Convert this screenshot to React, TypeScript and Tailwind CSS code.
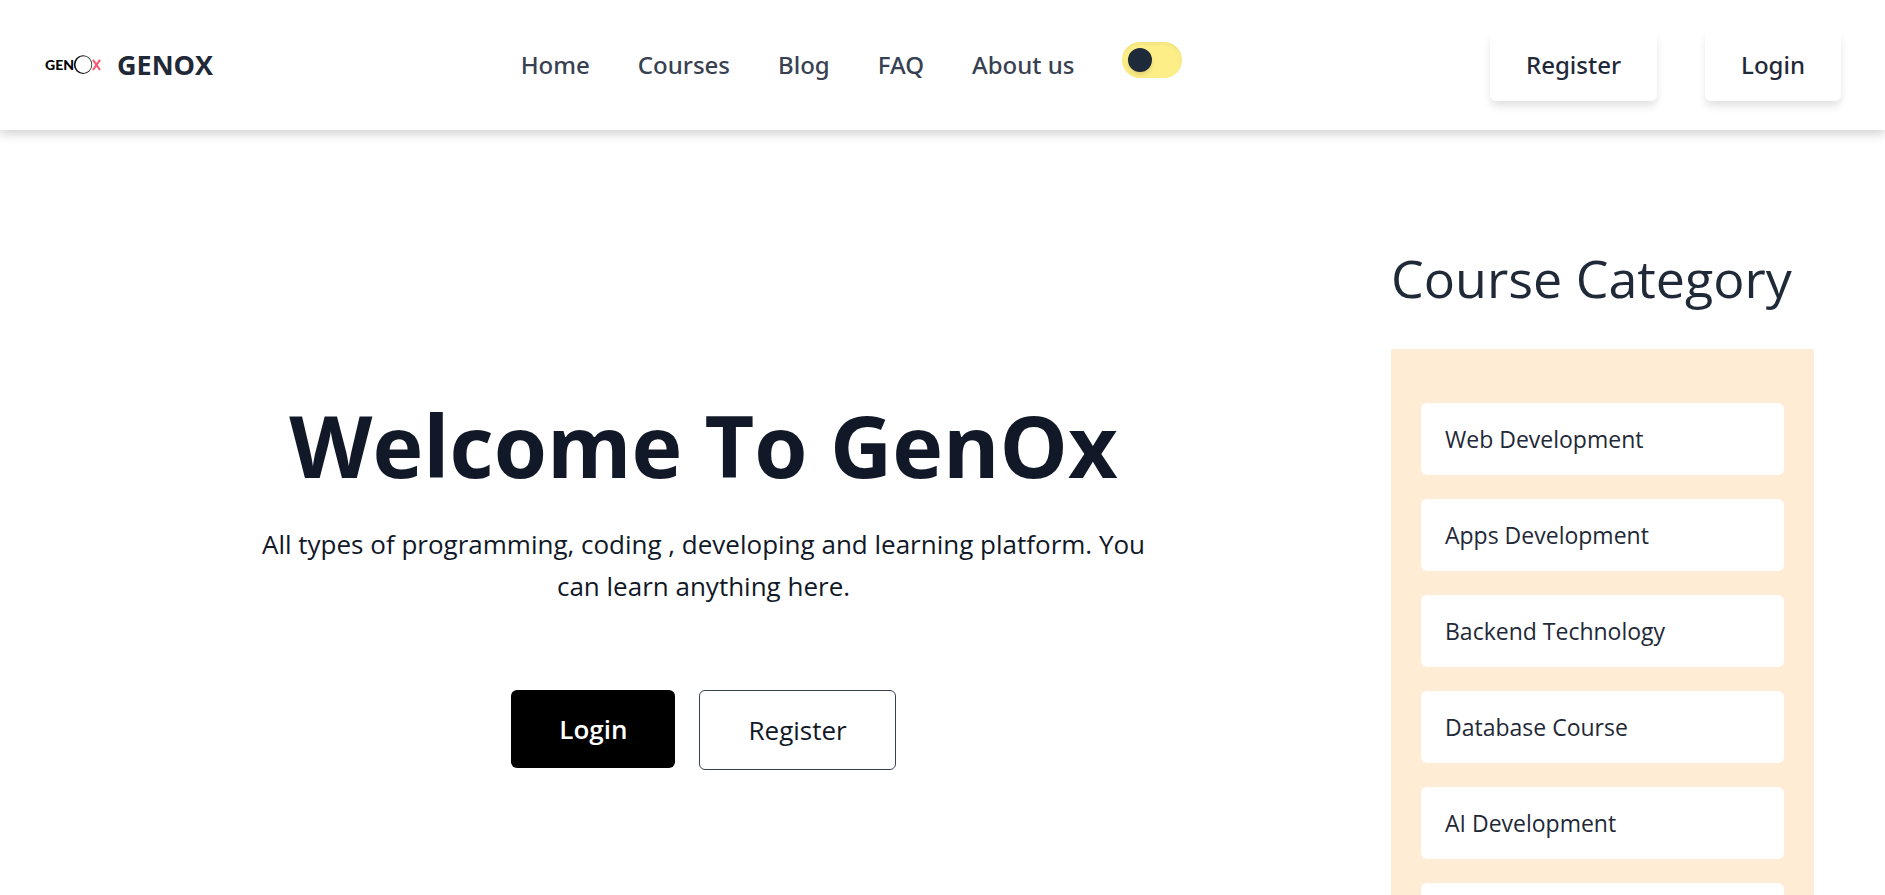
import { useState } from "react";

const navLinks = ["Home", "Courses", "Blog", "FAQ", "About us"];

const categories = [
  "Web Development",
  "Apps Development",
  "Backend Technology",
  "Database Course",
  "AI Development",
  "Data Science",
];

function LogoMark() {
  return (
    <svg width="58" height="24" viewBox="0 0 58 24" aria-hidden="true">
      <text x="1" y="17" fontFamily="Lato, sans-serif" fontWeight="900" fontSize="14" fill="#000000">
        GEN
      </text>
      <path
        fillRule="evenodd"
        fill="#111111"
        d="M39 2.2a9.2 9.4 0 1 0 0 18.8a9.2 9.4 0 1 0 0-18.8ZM39.5 3.3a8 8.3 0 1 1 0 16.6a8 8.3 0 1 1 0-16.6Z"
      />
      <path d="M49 6.8L56 17M56 6.8L49 17" stroke="#f65d73" strokeWidth="2.2" fill="none" />
    </svg>
  );
}

function ThemeSwitch() {
  const [dark, setDark] = useState(false);
  return (
    <button
      type="button"
      role="switch"
      aria-checked={dark}
      aria-label="Dark mode"
      onClick={() => setDark(!dark)}
      className={`mb-2.5 flex h-9 w-15 items-center rounded-full bg-[#fdee87] px-1.5 inset-shadow-sm ${dark ? "justify-end" : "justify-start"}`}
    >
      <span className="size-6 rounded-full bg-gray-800 shadow-md" />
    </button>
  );
}

export default function App() {
  return (
    <div className="min-h-screen bg-white font-['Open_Sans','Noto_Sans',sans-serif] text-[#1f2937]">
      <header className="flex h-[130px] items-center justify-between px-11 shadow-[0_4px_10px_rgba(0,0,0,0.18)]">
        <a href="#home" className="flex items-center gap-[15px]">
          <LogoMark />
          <span className="text-[27px] font-bold">GENOX</span>
        </a>
        <nav className="flex items-center gap-12 font-['Noto_Sans',sans-serif] text-[24px] font-medium text-[#374151]">
          {navLinks.map((label) => (
            <a key={label} href="#">
              {label}
            </a>
          ))}
          <ThemeSwitch />
        </nav>
        <div className="flex gap-12 font-['Noto_Sans',sans-serif] text-[24px] font-medium">
          <button type="button" className="h-[71px] rounded-md bg-white px-9 shadow-[0_6px_9px_-1px_rgba(0,0,0,0.12)]">
            Register
          </button>
          <button type="button" className="h-[71px] rounded-md bg-white px-9 shadow-[0_6px_9px_-1px_rgba(0,0,0,0.12)]">
            Login
          </button>
        </div>
      </header>

      <main className="flex items-start pr-[71px] pl-4">
        <section className="flex flex-1 flex-col items-center pt-[270px] text-center text-[#111827]">
          <h1 className="text-[86px] leading-[90px] font-bold">Welcome To GenOx</h1>
          <p className="mt-[33px] max-w-[900px] text-[26px] leading-[42px]">
            All types of programming, coding , developing and learning platform. You can learn anything here.
          </p>
          <div className="mt-[83px] flex items-start gap-6 text-[26px] leading-[42px]">
            <button type="button" className="rounded-md bg-black px-12 py-[18px] font-semibold text-white">
              Login
            </button>
            <button type="button" className="rounded-md border border-[#374151] px-12 py-[18px]">
              Register
            </button>
          </div>
        </section>

        <aside className="w-[423px] pt-[116px]">
          <h2 className="text-[52px] leading-[63px] whitespace-nowrap">Course Category</h2>
          <ul className="mt-10 flex flex-col gap-6 bg-[#ffecd5] px-[30px] py-[54px]">
            {categories.map((name) => (
              <li key={name}>
                <a href="#" className="flex h-18 items-center rounded-md bg-white px-6 text-[23px] text-[#1f2937]">
                  {name}
                </a>
              </li>
            ))}
          </ul>
        </aside>
      </main>
    </div>
  );
}
